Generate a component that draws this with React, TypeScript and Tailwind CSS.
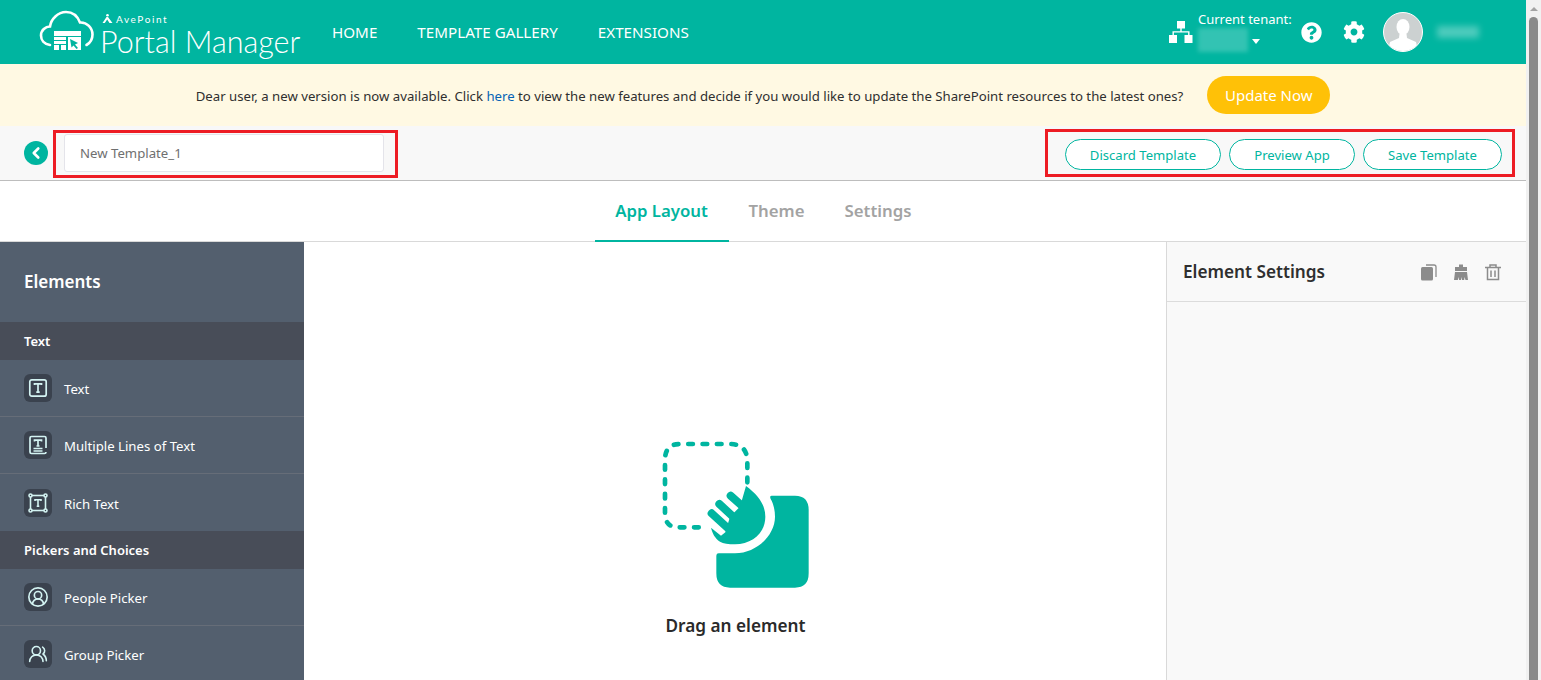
import { ChevronLeft, UsersRound, CircleUserRound } from "lucide-react";
import { FaCog, FaQuestionCircle } from "react-icons/fa";

function LogoMark() {
	return (
		<svg width="56" height="44" viewBox="0 0 56 44" fill="none" className="shrink-0">
			<path
				d="M11 35 C5 34 2 30 2 25.500 C2 20 6.500 16.500 11 16.500 C12 9 19 2 27 2 C33.500 2 38.500 6 41 12.500 C48 12 53.500 18 53.500 24.500 C53.500 29.500 51 33 47.500 35"
				stroke="white"
				strokeWidth="2.600"
				strokeLinecap="round"
			/>
			<rect x="15" y="21" width="27" height="5" fill="white" />
			<rect x="15" y="27" width="12" height="3" fill="white" />
			<rect x="15" y="31" width="12" height="3" fill="white" />
			<rect x="15" y="35" width="5" height="5" fill="white" />
			<rect x="22" y="35" width="5" height="5" fill="white" />
			<rect x="29" y="27" width="13" height="13" fill="white" />
			<path d="M31 29 L39 33 L36 34.500 L39 38 L37.500 39 L34.500 35.500 L32.500 37.500 Z" fill="#00b5a0" />
		</svg>
	);
}

function AvePointMark() {
	return (
		<svg width="11" height="9" viewBox="0 0 11 9" fill="white" className="shrink-0">
			<circle cx="5.500" cy="1.300" r="1.300" />
			<path d="M4.500 3 L6 3 L10.500 9 L7.500 9 L5.200 5.500 L2.800 9 L0.500 9 Z" />
		</svg>
	);
}

function TenantIcon() {
	return (
		<svg width="26" height="24" viewBox="0 0 26 24" fill="white">
			<rect x="9" y="1" width="8" height="7.500" />
			<rect x="1" y="15" width="8" height="8" />
			<rect x="16.500" y="15" width="8" height="8" />
			<path d="M12.300 8h1.400v3.200H21.500V15h-1.400v-2.400H5.900V15H4.500v-3.800h7.800z" />
		</svg>
	);
}

function ElementIcon({ kind }: { kind: string }) {
	const stroke = "#d3f3f2";
	return (
		<div className="w-7 h-7 rounded-md bg-[#3a424e] flex items-center justify-center shrink-0">
			{kind === "text" && (
				<svg width="22" height="22" viewBox="0 0 22 22" fill="none" stroke={stroke} strokeWidth="1.700">
					<rect x="2.800" y="2.800" width="16.400" height="16.400" rx="2" />
					<path d="M7.500 8V6.800h7V8M11 6.800v8.400M9.300 15.200h3.400" />
				</svg>
			)}
			{kind === "multi" && (
				<svg width="22" height="22" viewBox="0 0 22 22" fill="none" stroke={stroke} strokeWidth="1.700">
					<path d="M19 14V4a1.500 1.500 0 0 0-1.500-1.500h-13A1.500 1.500 0 0 0 3 4v14a1.500 1.500 0 0 0 1.500 1.500h13A1.500 1.500 0 0 0 19 18" />
					<path d="M7.500 7.500V6.200h7v1.300M11 6.200v5.800M9.500 12h3M6.500 14.500h9M6.500 17h9" />
				</svg>
			)}
			{kind === "rich" && (
				<svg width="22" height="22" viewBox="0 0 22 22" fill="none" stroke={stroke} strokeWidth="1.600">
					<rect x="3.500" y="3.500" width="15" height="15" />
					<circle cx="3.500" cy="3.500" r="1.500" fill="#3a424e" />
					<circle cx="18.500" cy="3.500" r="1.500" fill="#3a424e" />
					<circle cx="3.500" cy="18.500" r="1.500" fill="#3a424e" />
					<circle cx="18.500" cy="18.500" r="1.500" fill="#3a424e" />
					<path d="M8 9V7.800h6V9M11 7.800v6.400M9.700 14.200h2.600" />
				</svg>
			)}
			{kind === "people" && <CircleUserRound size={22} color={stroke} strokeWidth={1.800} />}
			{kind === "group" && <UsersRound size={20} color={stroke} strokeWidth={1.900} />}
		</div>
	);
}

function ElementRow({ kind, label, last }: { kind: string; label: string; last?: boolean }) {
	return (
		<div className={`h-[57px] flex items-center pl-6 gap-3 ${last ? "" : "border-b border-[#666d78]"}`}>
			<ElementIcon kind={kind} />
			<span className="text-[13.200px] text-white mt-[4px]">{label}</span>
		</div>
	);
}

function SectionRow({ label }: { label: string }) {
	return (
		<div className="h-[38px] pt-[2px] bg-[#484d58] flex items-center pl-6 text-[13px] font-semibold text-white">
			{label}
		</div>
	);
}

function OutlineButton({ label, width }: { label: string; width: string }) {
	return (
		<button
			className={`h-[31px] pt-[2px] ${width} rounded-full border border-[#00b5a0] bg-white text-[13.100px] text-[#00b5a0]`}
		>
			{label}
		</button>
	);
}

function DragIllustration() {
	return (
		<svg width="190" height="180" viewBox="0 0 570 540" fill="none">
			<path
				d="M322 172 V110 Q322 57 270 57 H120 Q75 57 75 105 V265 Q75 307 115 307 H205"
				stroke="#00b5a0"
				strokeWidth="14"
				strokeLinecap="round"
				strokeDasharray="14 29"
			/>
			<path d="M215 265 L275 320 M238 237 L290 285 M272 212 L320 255" stroke="#00b5a0" strokeWidth="24" strokeLinecap="round" />
			<path
				d="M213 308 L243 332 L256 322 L270 275 L300 245 L318 183 C355 210 376 240 376 275 C376 325 335 358 285 358 C265 358 250 356 240 350 C225 340 217 325 213 308 Z"
				fill="#00b5a0"
			/>
			<path
				d="M395 212 H465 Q506 212 506 255 V445 Q506 488 465 488 H270 Q229 488 229 445 V392 Q229 385 236 385 H285 C350 385 405 330 405 275 C405 255 400 235 392 222 Q388 212 395 212 Z"
				fill="#00b5a0"
			/>
		</svg>
	);
}

export default function App() {
	return (
		<div className="h-[680px] w-[1541px] overflow-hidden flex bg-white font-['Noto_Sans',sans-serif] text-[#2f2f2f] relative">
			<div className="w-[1526px] flex flex-col">
				{/* Header */}
				<header className="h-16 bg-[#00b5a0] flex items-center text-white shrink-0">
					<div className="ml-[39px] flex items-center w-[293px]">
						<LogoMark />
						<div className="ml-[5px] flex flex-col font-['Lato',sans-serif] font-light leading-none">
							<div className="flex items-center gap-[3px] ml-[2px] mt-[6px] text-[10px] tracking-[0.16em] font-normal">
								<AvePointMark />
								<span>AvePoint</span>
							</div>
							<span className="text-[30.500px] whitespace-nowrap mt-[2px]">Portal Manager</span>
						</div>
					</div>
					<nav className="flex gap-10 text-[15.200px]">
						<span>HOME</span>
						<span>TEMPLATE GALLERY</span>
						<span>EXTENSIONS</span>
					</nav>
					<div className="ml-auto flex items-center">
						<TenantIcon />
						<div className="ml-[4px] w-[98px] text-[13px] leading-[18px] -mt-[2px]">
							<div className="whitespace-nowrap">Current tenant:</div>
							<div className="flex items-center gap-[4px]">
								<div className="w-[50px] h-[24px] bg-white/20 blur-[2px]" />
								<div className="w-0 h-0 border-x-[4px] border-x-transparent border-t-[5px] border-t-white mt-[2px]" />
							</div>
						</div>
						<FaQuestionCircle size={21} color="white" className="ml-[5px]" />
						<FaCog size={22} color="white" className="ml-[21px]" />
						<div className="ml-[18px] w-10 h-10 rounded-full bg-[#ccd1d1] border border-white overflow-hidden">
							<svg width="38" height="38" viewBox="0 0 38 38" fill="white">
								<ellipse cx="19" cy="14" rx="6.500" ry="8" />
								<path d="M15.500 21 L22.500 21 L23 25 L32 29 L34 38 L4 38 L6 29 L15 25 Z" />
							</svg>
						</div>
						<div className="ml-[14px] mr-[47px] w-[42px] h-3 bg-white/30 blur-[3px]" />
					</div>
				</header>

				{/* Update banner */}
				<div className="h-[62px] bg-[#fff9e3] flex items-center justify-center shrink-0">
					<span className="text-[13.200px] mt-[4px]">
						Dear user, a new version is now available. Click <span className="text-[#0563b5]">here</span> to view the
						new features and decide if you would like to update the SharePoint resources to the latest ones?
					</span>
					<button className="ml-6 w-[123px] h-[38px] rounded-full bg-[#ffc107] text-white text-[15px]">
						Update Now
					</button>
				</div>

				{/* Toolbar */}
				<div className="h-[55px] bg-[#f8f8f8] border-b border-[#bdbdbd] flex items-center shrink-0">
					<div className="ml-6 w-6 h-6 rounded-full bg-[#00b5a0] flex items-center justify-center">
						<ChevronLeft size={18} color="white" strokeWidth={3.500} />
					</div>
					<div className="ml-4 w-[320px] h-[38px] pt-[2px] bg-white border border-[#e4e4ea] rounded-[3px] flex items-center pl-[15px] text-[13.200px] text-[#6f6f6f]">
						New Template_1
					</div>
					<div className="ml-auto mr-6 mt-[3px] flex gap-2">
						<OutlineButton label="Discard Template" width="w-[156px]" />
						<OutlineButton label="Preview App" width="w-[126px]" />
						<OutlineButton label="Save Template" width="w-[139px]" />
					</div>
				</div>

				{/* Tabs */}
				<div className="h-[61px] border-b border-[#d9d9d9] flex justify-center items-stretch shrink-0 pr-[20px] text-[16.800px] font-semibold">
					<div className="w-[134px] flex items-center justify-center text-[#00b5a0] border-b-2 border-[#00b5a0] -mb-px">
						App Layout
					</div>
					<div className="ml-5 flex items-center text-[#a3a3a3]">Theme</div>
					<div className="ml-10 flex items-center text-[#a3a3a3]">Settings</div>
				</div>

				{/* Body */}
				<div className="flex-1 flex min-h-0">
					<aside className="w-[304px] bg-[#535f6e] shrink-0 text-white overflow-hidden">
						<div className="h-[80px] flex items-center pl-6 text-[17px] font-semibold">Elements</div>
						<SectionRow label="Text" />
						<ElementRow kind="text" label="Text" />
						<ElementRow kind="multi" label="Multiple Lines of Text" />
						<ElementRow kind="rich" label="Rich Text" last />
						<SectionRow label="Pickers and Choices" />
						<ElementRow kind="people" label="People Picker" />
						<ElementRow kind="group" label="Group Picker" />
					</aside>
					<main className="flex-1 flex flex-col items-center">
						<div className="mt-[183px]">
							<DragIllustration />
						</div>
						<div className="mt-[8px] ml-[1px] text-[17.200px] font-semibold text-[#2a2a2a]">Drag an element</div>
					</main>
					<aside className="w-[360px] bg-[#f9f9f9] border-l border-[#d9d9d9] shrink-0">
						<div className="h-[60px] border-b border-[#dcdcdc] flex items-center pl-4 pr-6">
							<span className="text-[17.200px] font-semibold">Element Settings</span>
							<div className="ml-auto flex items-center gap-[14px]">
								<svg width="18" height="18" viewBox="0 0 18 18" fill="#8c8c8c">
									<rect x="1" y="4" width="12" height="13.500" rx="1.500" />
									<path d="M6 2 H14 Q16 2 16 4 V14" fill="none" stroke="#8c8c8c" strokeWidth="1.300" />
								</svg>
								<svg width="18" height="18" viewBox="0 0 18 18" fill="#8c8c8c">
									<path d="M7 1.500h4v2.500h4v4H3V4h4z" />
									<path d="M3 9h12l1 8h-2.500l-1-3-.3 3H10l-.5-3-.5 3H7l-.2-3-1 3H2z" />
								</svg>
								<svg width="18" height="18" viewBox="0 0 18 18" fill="none" stroke="#8c8c8c" strokeWidth="1.500">
									<path d="M1 4.500H17M6 4.500V2h6v2.500M3.500 4.500V16.500H14.500V4.500M7 7.500V14M11 7.500V14" />
								</svg>
							</div>
						</div>
					</aside>
				</div>
			</div>

			{/* Scrollbar */}
			<div className="w-[15px] bg-[#f1f1f1] flex flex-col items-center shrink-0">
				<div className="h-[17px] flex items-center justify-center">
					<div className="w-0 h-0 border-x-[4px] border-x-transparent border-b-[4px] border-b-[#a3a3a3]" />
				</div>
				<div className="w-[9px] flex-1 bg-[#8a8a8a] rounded-t-[5px]" />
			</div>

			{/* Red annotation boxes */}
			<div className="absolute left-[53px] top-[130px] w-[345px] h-[48px] border-[3px] border-[#ed1c24]" />
			<div className="absolute left-[1045px] top-[129px] w-[470px] h-[48px] border-[3px] border-[#ed1c24]" />
		</div>
	);
}
